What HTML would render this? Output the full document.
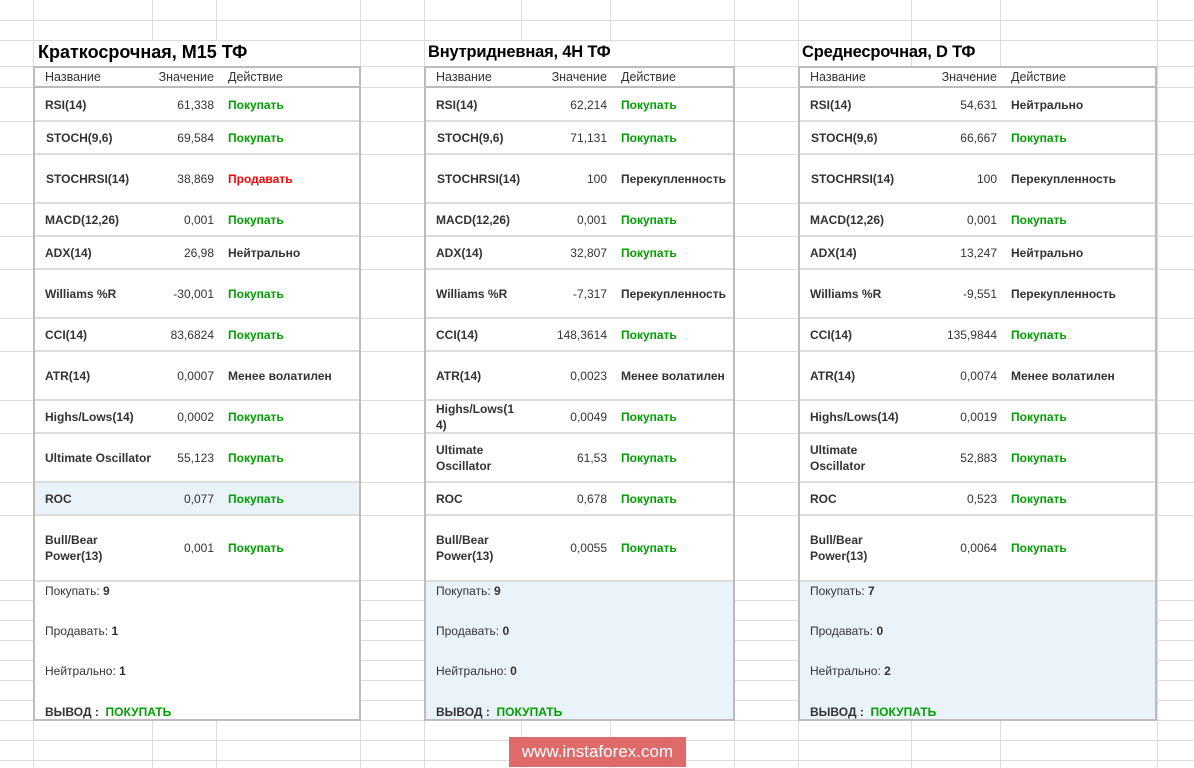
<!DOCTYPE html>
<html><head><meta charset="utf-8"><style>
*{margin:0;padding:0;box-sizing:border-box}
body{width:1194px;height:768px;background:#fff;position:relative;overflow:hidden;font-family:"Liberation Sans",Arial,sans-serif;font-size:12px;color:#333}
.vl{position:absolute;top:0;height:768px;width:1px;background:#dcdcdc}
.hl{position:absolute;left:0;width:1194px;height:1px;background:#dcdcdc}
.tbl{position:absolute;top:66px;height:655px;background:#fff}
.brd{position:absolute;top:66px;height:655px;border:2px solid #bcbcbc;pointer-events:none}
.row{position:absolute;left:0;right:0;border-top:2px solid #dcdcdc}
.row span{position:absolute;top:50%;transform:translateY(-50%);white-space:nowrap;line-height:16px}
.hd span{font-size:12.5px}
.b{font-weight:bold}
.g{color:#00a000;font-weight:bold}
.r{color:#f00;font-weight:bold}
.title{position:absolute;top:43px;font-weight:bold;font-size:16.5px;color:#000;letter-spacing:-0.2px}
.sum{position:absolute;left:0;right:0;top:514px;height:141px;border-top:2px solid #dcdcdc}
.sum div{position:absolute;line-height:20px}
</style></head><body>
<div class="vl" style="left:33px"></div><div class="vl" style="left:152px"></div><div class="vl" style="left:216px"></div><div class="vl" style="left:360px"></div><div class="vl" style="left:424px"></div><div class="vl" style="left:521px"></div><div class="vl" style="left:610px"></div><div class="vl" style="left:734px"></div><div class="vl" style="left:798px"></div><div class="vl" style="left:911px"></div><div class="vl" style="left:1000px"></div><div class="vl" style="left:1157px"></div>
<div class="hl" style="top:20px"></div><div class="hl" style="top:40px"></div><div class="hl" style="top:66px"></div><div class="hl" style="top:87px"></div><div class="hl" style="top:121px"></div><div class="hl" style="top:154px"></div><div class="hl" style="top:203px"></div><div class="hl" style="top:236px"></div><div class="hl" style="top:269px"></div><div class="hl" style="top:318px"></div><div class="hl" style="top:351px"></div><div class="hl" style="top:400px"></div><div class="hl" style="top:433px"></div><div class="hl" style="top:482px"></div><div class="hl" style="top:515px"></div><div class="hl" style="top:580px"></div><div class="hl" style="top:600px"></div><div class="hl" style="top:620px"></div><div class="hl" style="top:640px"></div><div class="hl" style="top:660px"></div><div class="hl" style="top:680px"></div><div class="hl" style="top:700px"></div><div class="hl" style="top:720px"></div><div class="hl" style="top:740px"></div><div class="hl" style="top:760px"></div>

<div style="position:absolute;left:34px;top:41px;width:326px;height:25px;background:#fff"></div>
<div style="position:absolute;left:425px;top:41px;width:309px;height:25px;background:#fff"></div>
<div style="position:absolute;left:799px;top:41px;width:112px;height:25px;background:#fff"></div>
<div class="title" style="left:38px;top:42px;font-size:18px;letter-spacing:0">Краткосрочная, M15 ТФ</div>
<div class="title" style="left:428px">Внутридневная, 4H ТФ</div>
<div class="title" style="left:802px">Среднесрочная, D ТФ</div>

<div class="tbl" style="left:33px;width:327px">
<div class="row hd" style="top:0;height:21px;border-top:none"><span style="left:12px">Название</span><span style="right:146px">Значение</span><span style="left:195px">Действие</span></div>
<div class="row" style="top:20px;height:35px;border-top:2px solid #bcbcbc"><span class="b" style="left:12px">RSI(14)</span><span style="right:146px">61,338</span><span class="g" style="left:195px">Покупать</span></div>
<div class="row" style="top:54px;height:34px"><span class="b" style="left:13px">STOCH(9,6)</span><span style="right:146px">69,584</span><span class="g" style="left:195px">Покупать</span></div>
<div class="row" style="top:87px;height:50px"><span class="b" style="left:13px">STOCHRSI(14)</span><span style="right:146px">38,869</span><span class="r" style="left:195px">Продавать</span></div>
<div class="row" style="top:136px;height:34px"><span class="b" style="left:12px">MACD(12,26)</span><span style="right:146px">0,001</span><span class="g" style="left:195px">Покупать</span></div>
<div class="row" style="top:169px;height:34px"><span class="b" style="left:12px">ADX(14)</span><span style="right:146px">26,98</span><span class="b" style="left:195px">Нейтрально</span></div>
<div class="row" style="top:202px;height:50px"><span class="b" style="left:12px">Williams %R</span><span style="right:146px">-30,001</span><span class="g" style="left:195px">Покупать</span></div>
<div class="row" style="top:251px;height:34px"><span class="b" style="left:12px">CCI(14)</span><span style="right:146px">83,6824</span><span class="g" style="left:195px">Покупать</span></div>
<div class="row" style="top:284px;height:50px"><span class="b" style="left:12px">ATR(14)</span><span style="right:146px">0,0007</span><span class="b" style="left:195px">Менее волатилен</span></div>
<div class="row" style="top:333px;height:34px"><span class="b" style="left:12px">Highs/Lows(14)</span><span style="right:146px">0,0002</span><span class="g" style="left:195px">Покупать</span></div>
<div class="row" style="top:366px;height:50px"><span class="b" style="left:12px">Ultimate Oscillator</span><span style="right:146px">55,123</span><span class="g" style="left:195px">Покупать</span></div>
<div class="row" style="top:415px;height:34px;background:#ebf3fa"><span class="b" style="left:12px">ROC</span><span style="right:146px">0,077</span><span class="g" style="left:195px">Покупать</span></div>
<div class="row" style="top:448px;height:66px"><span class="b" style="left:12px">Bull/Bear<br>Power(13)</span><span style="right:146px">0,001</span><span class="g" style="left:195px">Покупать</span></div>
<div class="sum"><div style="left:12px;top:-1px">Покупать: <b>9</b></div><div style="left:12px;top:39px">Продавать: <b>1</b></div><div style="left:12px;top:79px">Нейтрально: <b>1</b></div><div style="left:12px;top:120px"><b>ВЫВОД :</b>&nbsp; <span class="g">ПОКУПАТЬ</span></div></div>
</div>
<div class="brd" style="left:33px;width:328px"></div>

<div class="tbl" style="left:424px;width:310px">
<div class="row hd" style="top:0;height:21px;border-top:none"><span style="left:12px">Название</span><span style="right:127px">Значение</span><span style="left:197px">Действие</span></div>
<div class="row" style="top:20px;height:35px;border-top:2px solid #bcbcbc"><span class="b" style="left:12px">RSI(14)</span><span style="right:127px">62,214</span><span class="g" style="left:197px">Покупать</span></div>
<div class="row" style="top:54px;height:34px"><span class="b" style="left:13px">STOCH(9,6)</span><span style="right:127px">71,131</span><span class="g" style="left:197px">Покупать</span></div>
<div class="row" style="top:87px;height:50px"><span class="b" style="left:13px">STOCHRSI(14)</span><span style="right:127px">100</span><span class="b" style="left:197px">Перекупленность</span></div>
<div class="row" style="top:136px;height:34px"><span class="b" style="left:12px">MACD(12,26)</span><span style="right:127px">0,001</span><span class="g" style="left:197px">Покупать</span></div>
<div class="row" style="top:169px;height:34px"><span class="b" style="left:12px">ADX(14)</span><span style="right:127px">32,807</span><span class="g" style="left:197px">Покупать</span></div>
<div class="row" style="top:202px;height:50px"><span class="b" style="left:12px">Williams %R</span><span style="right:127px">-7,317</span><span class="b" style="left:197px">Перекупленность</span></div>
<div class="row" style="top:251px;height:34px"><span class="b" style="left:12px">CCI(14)</span><span style="right:127px">148,3614</span><span class="g" style="left:197px">Покупать</span></div>
<div class="row" style="top:284px;height:50px"><span class="b" style="left:12px">ATR(14)</span><span style="right:127px">0,0023</span><span class="b" style="left:197px">Менее волатилен</span></div>
<div class="row" style="top:333px;height:34px"><span class="b" style="left:12px">Highs/Lows(1<br>4)</span><span style="right:127px">0,0049</span><span class="g" style="left:197px">Покупать</span></div>
<div class="row" style="top:366px;height:50px"><span class="b" style="left:12px">Ultimate<br>Oscillator</span><span style="right:127px">61,53</span><span class="g" style="left:197px">Покупать</span></div>
<div class="row" style="top:415px;height:34px"><span class="b" style="left:12px">ROC</span><span style="right:127px">0,678</span><span class="g" style="left:197px">Покупать</span></div>
<div class="row" style="top:448px;height:66px"><span class="b" style="left:12px">Bull/Bear<br>Power(13)</span><span style="right:127px">0,0055</span><span class="g" style="left:197px">Покупать</span></div>
<div class="sum" style="background:#ebf3fa"><div style="left:12px;top:-1px">Покупать: <b>9</b></div><div style="left:12px;top:39px">Продавать: <b>0</b></div><div style="left:12px;top:79px">Нейтрально: <b>0</b></div><div style="left:12px;top:120px"><b>ВЫВОД :</b>&nbsp; <span class="g">ПОКУПАТЬ</span></div></div>
</div>
<div class="brd" style="left:424px;width:311px"></div>

<div class="tbl" style="left:798px;width:358px">
<div class="row hd" style="top:0;height:21px;border-top:none"><span style="left:12px">Название</span><span style="right:159px">Значение</span><span style="left:213px">Действие</span></div>
<div class="row" style="top:20px;height:35px;border-top:2px solid #bcbcbc"><span class="b" style="left:12px">RSI(14)</span><span style="right:159px">54,631</span><span class="b" style="left:213px">Нейтрально</span></div>
<div class="row" style="top:54px;height:34px"><span class="b" style="left:13px">STOCH(9,6)</span><span style="right:159px">66,667</span><span class="g" style="left:213px">Покупать</span></div>
<div class="row" style="top:87px;height:50px"><span class="b" style="left:13px">STOCHRSI(14)</span><span style="right:159px">100</span><span class="b" style="left:213px">Перекупленность</span></div>
<div class="row" style="top:136px;height:34px"><span class="b" style="left:12px">MACD(12,26)</span><span style="right:159px">0,001</span><span class="g" style="left:213px">Покупать</span></div>
<div class="row" style="top:169px;height:34px"><span class="b" style="left:12px">ADX(14)</span><span style="right:159px">13,247</span><span class="b" style="left:213px">Нейтрально</span></div>
<div class="row" style="top:202px;height:50px"><span class="b" style="left:12px">Williams %R</span><span style="right:159px">-9,551</span><span class="b" style="left:213px">Перекупленность</span></div>
<div class="row" style="top:251px;height:34px"><span class="b" style="left:12px">CCI(14)</span><span style="right:159px">135,9844</span><span class="g" style="left:213px">Покупать</span></div>
<div class="row" style="top:284px;height:50px"><span class="b" style="left:12px">ATR(14)</span><span style="right:159px">0,0074</span><span class="b" style="left:213px">Менее волатилен</span></div>
<div class="row" style="top:333px;height:34px"><span class="b" style="left:12px">Highs/Lows(14)</span><span style="right:159px">0,0019</span><span class="g" style="left:213px">Покупать</span></div>
<div class="row" style="top:366px;height:50px"><span class="b" style="left:12px">Ultimate<br>Oscillator</span><span style="right:159px">52,883</span><span class="g" style="left:213px">Покупать</span></div>
<div class="row" style="top:415px;height:34px"><span class="b" style="left:12px">ROC</span><span style="right:159px">0,523</span><span class="g" style="left:213px">Покупать</span></div>
<div class="row" style="top:448px;height:66px"><span class="b" style="left:12px">Bull/Bear<br>Power(13)</span><span style="right:159px">0,0064</span><span class="g" style="left:213px">Покупать</span></div>
<div class="sum" style="background:#ebf3fa"><div style="left:12px;top:-1px">Покупать: <b>7</b></div><div style="left:12px;top:39px">Продавать: <b>0</b></div><div style="left:12px;top:79px">Нейтрально: <b>2</b></div><div style="left:12px;top:120px"><b>ВЫВОД :</b>&nbsp; <span class="g">ПОКУПАТЬ</span></div></div>
</div>
<div class="brd" style="left:798px;width:359px"></div>

<div style="position:absolute;left:509px;top:737px;width:177px;height:30px;background:#df6a6a;color:#fff;font-size:17px;line-height:30px;text-align:center">www.instaforex.com</div>
</body></html>
